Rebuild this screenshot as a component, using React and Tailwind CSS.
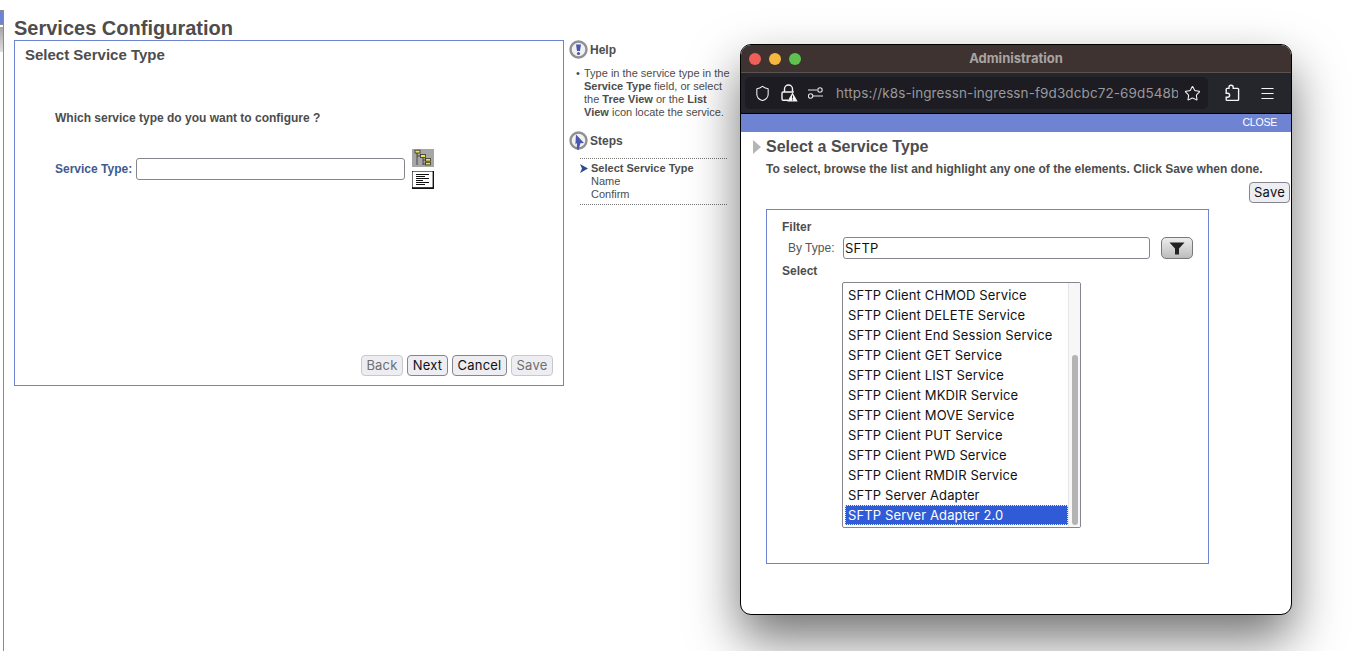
import React from 'react';
import { Shield, Star, Menu } from 'lucide-react';

const sftpServices = [
  'SFTP Client CHMOD Service',
  'SFTP Client DELETE Service',
  'SFTP Client End Session Service',
  'SFTP Client GET Service',
  'SFTP Client LIST Service',
  'SFTP Client MKDIR Service',
  'SFTP Client MOVE Service',
  'SFTP Client PUT Service',
  'SFTP Client PWD Service',
  'SFTP Client RMDIR Service',
  'SFTP Server Adapter',
  'SFTP Server Adapter 2.0',
];

function HelpIcon() {
  return (
    <svg width="19" height="19" viewBox="0 0 19 19" className="shrink-0">
      <circle cx="9.5" cy="9.5" r="8" fill="#f1f1f1" stroke="#8f8f94" strokeWidth="2.4" />
      <path d="M7 4.5h5l-1 6.5H8z" fill="#4a59ad" />
      <circle cx="9.5" cy="13.5" r="1.6" fill="#4a59ad" />
    </svg>
  );
}

function StepsIcon() {
  return (
    <svg width="19" height="20" viewBox="0 0 19 20" className="shrink-0">
      <circle cx="9.5" cy="9.5" r="8" fill="#f1f1f1" stroke="#8f8f94" strokeWidth="2.4" />
      <path d="M7 3.5l8 8.5-3.6.2L9.6 19 7.8 18.4 8 12l-1.6 1.6z" fill="#4a59ad" />
    </svg>
  );
}

function TreeIcon() {
  return (
    <svg width="22" height="18" viewBox="0 0 22 18" className="block">
      <rect width="22" height="18" fill="#a6a6a6" />
      <path d="M5 4v12M5 7h4M11 8v8M11 11h3M11 15h3" stroke="#333" strokeWidth="0.8" fill="none" />
      <rect x="3" y="1.2" width="5" height="2.8" fill="#f2e34a" stroke="#222" strokeWidth="0.7" />
      <rect x="8.5" y="5.6" width="5" height="2.8" fill="#f2e34a" stroke="#222" strokeWidth="0.7" />
      <rect x="13.5" y="9.5" width="5" height="2.6" fill="#f2e34a" stroke="#222" strokeWidth="0.7" />
      <rect x="13.5" y="13.3" width="5" height="2.6" fill="#f2e34a" stroke="#222" strokeWidth="0.7" />
    </svg>
  );
}

function ListIcon() {
  return (
    <svg width="22" height="18" viewBox="0 0 22 18" className="block">
      <rect width="22" height="18" fill="#111" />
      <rect x="0.6" y="0.6" width="20" height="15.6" fill="#fff" />
      <path d="M4 3.5h13M4 5.5h9M4 7.5h13M4 9.5h7M4 11.5h13M4 13.5h9" stroke="#111" strokeWidth="1" />
    </svg>
  );
}

function LockWarnIcon() {
  return (
    <svg width="18" height="18" viewBox="0 0 18 18" fill="none" className="shrink-0">
      <path d="M4.5 8V5a4 4 0 0 1 8 0v3" stroke="#f4f4f4" strokeWidth="1.4" />
      <path d="M8 16.2H3.2a1.2 1.2 0 0 1-1.2-1.2V9.2A1.2 1.2 0 0 1 3.2 8h10.6" stroke="#f4f4f4" strokeWidth="1.4" />
      <path d="M12.5 8.5l5.2 9h-10.4z" fill="#f4f4f4" />
      <path d="M12.5 11.5v3M12.5 15.4v1" stroke="#25252c" strokeWidth="1" />
    </svg>
  );
}

function PermissionsIcon() {
  return (
    <svg width="15" height="12" viewBox="0 0 15 12" fill="none" className="shrink-0">
      <path d="M0 3h9M5 9h10" stroke="#e4e4e4" strokeWidth="1.2" />
      <circle cx="12" cy="3" r="2.2" stroke="#e4e4e4" strokeWidth="1.1" />
      <circle cx="2.6" cy="9" r="2.2" stroke="#e4e4e4" strokeWidth="1.1" />
    </svg>
  );
}

function PuzzleIcon() {
  return (
    <svg width="18" height="18" viewBox="0 0 18 18" fill="none" className="shrink-0">
      <path
        d="M8 1.2c1.3 0 2.2.9 2.2 2v1.2h4.6a.8.8 0 0 1 .8.8v10.4a.8.8 0 0 1-.8.8H4a.8.8 0 0 1-.8-.8v-2.3h1.4a2 2 0 0 0 0-4H3.2V5.2a.8.8 0 0 1 .8-.8h2V3.2c0-1.1.7-2 2-2z"
        stroke="#f4f4f4"
        strokeWidth="1.4"
      />
    </svg>
  );
}

function FilterIcon() {
  return (
    <svg width="16" height="13" viewBox="0 0 16 13">
      <path d="M0.5 0.5h15L10 6.5V12.5H6V6.5z" fill="#222" />
    </svg>
  );
}

function WizardButton({ label, disabled, width }) {
  return (
    <button
      disabled={disabled}
      className={
        width +
        ' h-[21px] rounded-[4px] bg-[#ededf2] border text-[13px] tracking-[0.2px] leading-none font-["Inter",sans-serif] ' +
        (disabled ? 'border-[#c8c8cd] text-[#6f6f6f]' : 'border-[#85858f] text-[#111]')
      }
    >
      {label}
    </button>
  );
}

function AdminWindow() {
  return (
    <div className="absolute left-[740px] top-[44px] w-[552px] h-[571px] rounded-[11px] overflow-hidden border border-black bg-white flex flex-col shadow-[0_24px_50px_rgba(0,0,0,0.55)]">
      <div className="relative h-[28px] shrink-0 bg-[#3e3331] border-b border-[#5a5250] flex items-center">
        <div className="flex gap-[8px] pl-[8px]">
          <span className="w-[12px] h-[12px] rounded-full bg-[#ee5f57]" />
          <span className="w-[12px] h-[12px] rounded-full bg-[#f5b83d]" />
          <span className="w-[12px] h-[12px] rounded-full bg-[#5fc24e]" />
        </div>
        <div className="absolute inset-0 flex items-center justify-center text-[13px] font-bold text-[#a9a4a2] font-['Inter',sans-serif]">
          Administration
        </div>
      </div>
      <div className="h-[41px] shrink-0 bg-[#25252c] border-b border-black flex items-center pl-[4px]">
        <div className="w-[463px] h-[32px] rounded-[5px] bg-[#1c1c22] flex items-center pl-[9px] pr-[7px]">
          <Shield size={17} color="#f4f4f4" strokeWidth={1.5} className="shrink-0" />
          <div className="ml-[9px]">
            <LockWarnIcon />
          </div>
          <div className="ml-[10px]">
            <PermissionsIcon />
          </div>
          <div className="ml-[13px] w-[342px] overflow-hidden whitespace-nowrap text-[13.5px] tracking-[0.1px] text-[#98989d] font-['Inter',sans-serif]">
            https://k8s-ingressn-ingressn-f9d3dcbc72-69d548bd
          </div>
          <Star size={17} color="#f4f4f4" strokeWidth={1.5} className="shrink-0 ml-auto" />
        </div>
        <div className="ml-[15px]">
          <PuzzleIcon />
        </div>
        <Menu size={17} color="#f4f4f4" strokeWidth={1.5} className="ml-[18px]" />
      </div>
      <div className="h-[18px] shrink-0 bg-[#6f83d3] flex items-center justify-end pr-[14px] pb-[1px] text-[10.5px] tracking-[-0.2px] text-white font-['Liberation_Sans',sans-serif]">
        CLOSE
      </div>
      <div className="flex-1 font-['Liberation_Sans',sans-serif] text-[#4d4d4d]">
        <div className="flex items-center pl-[12px] pt-[5px]">
          <span className="w-0 h-0 border-y-[7px] border-y-transparent border-l-[8px] border-l-[#b5b5b5]" />
          <h2 className="ml-[5px] text-[16px] leading-[19px] font-bold">Select a Service Type</h2>
        </div>
        <p className="ml-[25px] mt-[6px] text-[12px] leading-[14px] font-bold">
          To select, browse the list and highlight any one of the elements. Click Save when done.
        </p>
        <div className="flex justify-end mt-[6px] pr-[1px]">
          <button className="h-[21px] w-[41px] rounded-[4px] bg-[#ededf2] border border-[#85858f] text-[13px] tracking-[0.2px] leading-none text-[#111] font-['Inter',sans-serif]">
            Save
          </button>
        </div>
        <div className="ml-[25px] mt-[6px] w-[443px] h-[355px] border border-[#6f83d3] pl-[15px] pt-[10px]">
          <div className="text-[12px] leading-[14px] font-bold">Filter</div>
          <div className="flex items-center mt-[3px] pl-[6px]">
            <span className="w-[55px] text-[12px] text-[#555]">By Type:</span>
            <input
              readOnly
              value="SFTP"
              className="w-[307px] h-[22px] rounded-[3px] border border-[#85858f] px-[1px] text-[13px] tracking-[0.2px] text-[#111] font-['Inter',sans-serif]"
            />
            <button className="ml-[11px] w-[32px] h-[22px] rounded-[5px] border border-[#77777c] bg-gradient-to-b from-[#ededed] to-[#bcbcbc] flex items-center justify-center">
              <FilterIcon />
            </button>
          </div>
          <div className="mt-[5px] text-[12px] leading-[14px] font-bold">Select</div>
          <div className="ml-[60px] mt-[4px] w-[239px] h-[246px] rounded-[2px] border border-[#85858f] flex overflow-hidden">
            <ul className="flex-1 pt-[2px] pl-[2px]">
              {sftpServices.map((name, i) => {
                const selected = i === sftpServices.length - 1;
                return (
                  <li
                    key={name}
                    className={
                      "h-[20px] pl-[3px] leading-[20px] whitespace-nowrap text-[13px] tracking-[0.12px] font-['Inter',sans-serif] " +
                      (selected ? 'bg-[#2f5bd6] text-white outline-dotted outline-1 -outline-offset-1 outline-[#dfe6fb]' : 'text-[#111]')
                    }
                  >
                    {name}
                  </li>
                );
              })}
            </ul>
            <div className="w-[12px] shrink-0 bg-[#f7f7f7] border-l border-[#e6e6e6] flex justify-center pt-[72px]">
              <div className="w-[6px] h-[170px] rounded-full bg-[#b4b4b4]" />
            </div>
          </div>
        </div>
      </div>
    </div>
  );
}

export default function App() {
  return (
    <div className="relative w-[1361px] h-[651px] overflow-hidden bg-white font-['Liberation_Sans',sans-serif] text-[#4d4d4d]">
      <div className="absolute left-0 top-[10px] bottom-0 w-[4px] border-r border-[#8c8c8c]">
        <div className="h-[15px] bg-[#6f83d3] border-y border-[#8c8c8c]" />
        <div className="h-[25px] mt-[2px] bg-gradient-to-b from-[#a5a5a5] to-[#e0e0e0]" />
      </div>

      <div className="flex pl-[14px] pt-[17px]">
        <div className="w-[550px] shrink-0">
          <h1 className="text-[20px] leading-[23px] font-bold">Services Configuration</h1>
          <div className="h-[346px] border border-[#6f83d3] flex flex-col">
            <h2 className="pl-[10px] pt-[5px] text-[15px] leading-[18px] font-bold">Select Service Type</h2>
            <p className="pl-[40px] mt-[47px] text-[12px] leading-[14px] font-bold">Which service type do you want to configure ?</p>
            <div className="flex items-start pl-[40px] mt-[24px]">
              <label className="mt-[13px] text-[12px] leading-[14px] font-bold text-[#3f5a90]">Service Type:</label>
              <input readOnly className="ml-[4px] mt-[9px] w-[269px] h-[22px] rounded-[3px] border border-[#85858f] bg-white" />
              <div className="ml-[7px] flex flex-col gap-[4px]">
                <TreeIcon />
                <ListIcon />
              </div>
            </div>
            <div className="mt-auto flex justify-end gap-[4px] pr-[10px] pb-[9px]">
              <WizardButton label="Back" width="w-[42px]" disabled />
              <WizardButton label="Next" width="w-[41px]" />
              <WizardButton label="Cancel" width="w-[55px]" />
              <WizardButton label="Save" width="w-[42px]" disabled />
            </div>
          </div>
        </div>

        <aside className="ml-[5px] w-[165px] shrink-0 pt-[23px]">
          <div className="flex items-center gap-[2px]">
            <HelpIcon />
            <span className="text-[12px] font-bold">Help</span>
          </div>
          <div className="flex mt-[8px] pl-[7px] text-[11px] leading-[13px]">
            <span className="w-[8px] shrink-0">•</span>
            <p className="w-[146px]">
              Type in the service type in the <b>Service Type</b> field, or select the <b>Tree View</b> or the <b>List View</b> icon locate the service.
            </p>
          </div>
          <div className="flex items-center gap-[2px] mt-[12px]">
            <StepsIcon />
            <span className="text-[12px] font-bold">Steps</span>
          </div>
          <div className="ml-[11px] mt-[7px] w-[147px] border-y border-dotted border-[#777] py-[3px] text-[11px] leading-[13px]">
            <div className="flex items-center">
              <svg width="8" height="9" viewBox="0 0 8 9" className="mr-[3px] shrink-0">
                <path d="M0 0l8 4.5L0 9l2-4.5z" fill="#2e4a8e" />
              </svg>
              <b>Select Service Type</b>
            </div>
            <div className="pl-[11px]">Name</div>
            <div className="pl-[11px]">Confirm</div>
          </div>
        </aside>
      </div>

      <AdminWindow />
    </div>
  );
}
